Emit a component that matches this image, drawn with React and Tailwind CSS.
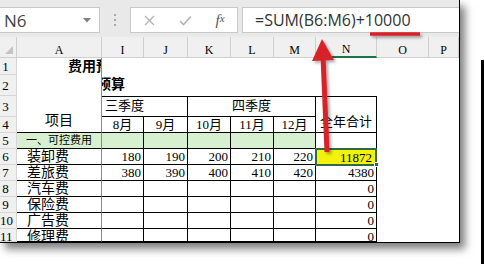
import React from "react";

const colStart = ["col-start-1", "col-start-2", "col-start-3", "col-start-4", "col-start-5", "col-start-6", "col-start-7", "col-start-8", "col-start-9", "col-start-10"];
const rowStart = ["row-start-1", "row-start-2", "row-start-3", "row-start-4", "row-start-5", "row-start-6", "row-start-7", "row-start-8", "row-start-9", "row-start-10", "row-start-11", "row-start-12"];

const tableFont = "font-['Liberation_Serif','Noto_Sans_CJK_SC',serif]";

const letters = ["A", "I", "J", "K", "L", "M", "N", "O", "P"];
const months = ["8月", "9月", "10月", "11月", "12月"];
const items = [
  ["装卸费", [180, 190, 200, 210, 220], 11872],
  ["差旅费", [380, 390, 400, 410, 420], 4380],
  ["汽车费", [], 0],
  ["保险费", [], 0],
  ["广告费", [], 0],
  ["修理费", [], 0],
];

function Cell({ c, r, className = "", children }) {
  return (
    <div className={`${colStart[c - 1]} ${rowStart[r - 1]} flex min-w-0 overflow-hidden text-black ${className}`}>
      {children}
    </div>
  );
}

function Toolbar() {
  return (
    <div className="flex h-[37px] items-start bg-[#e9e9e9] pt-[7px] font-['Open_Sans','Noto_Sans',sans-serif]">
      <div className="flex h-[26px] w-[100px] items-center justify-between border border-l-0 border-[#c8c8c8] bg-white pl-[4px] pr-[8px]">
        <span className="text-[17px] leading-none text-[#444]">N6</span>
        <svg width="8" height="5" viewBox="0 0 8 5">
          <path d="M0 0 L8 0 L4 4.5 Z" fill="#808080" />
        </svg>
      </div>
      <div className="flex h-[26px] w-[30px] flex-col items-center justify-center gap-[3px]">
        <span className="h-[2px] w-[2px] bg-[#a8a8a8]" />
        <span className="h-[2px] w-[2px] bg-[#a8a8a8]" />
        <span className="h-[2px] w-[2px] bg-[#a8a8a8]" />
      </div>
      <div className="flex h-[26px] w-[108px] items-center border border-[#c8c8c8] bg-white">
        <span className="flex w-[36px] justify-center">
          <svg width="11" height="11" viewBox="0 0 11 11">
            <path d="M1 1 L10 10 M10 1 L1 10" stroke="#b4b4b4" strokeWidth="1.4" />
          </svg>
        </span>
        <span className="flex w-[36px] justify-center">
          <svg width="13" height="11" viewBox="0 0 13 11">
            <path d="M1 6 L4.5 9.5 L12 1.5" stroke="#b4b4b4" strokeWidth="1.6" fill="none" />
          </svg>
        </span>
        <span className="flex w-[34px] justify-center font-['Liberation_Serif',serif] text-[15px] italic leading-none text-[#555]">
          f<span className="text-[11px]">x</span>
        </span>
      </div>
      <div className="ml-[4px] flex h-[26px] flex-1 items-center border border-r-0 border-[#c8c8c8] bg-white pl-[12px]">
        <span className="text-[16px] leading-none text-[#333]">=SUM(B6:M6)+10000</span>
      </div>
    </div>
  );
}

function Sheet() {
  const hdr = "items-end justify-center border-b border-r border-[#cfcfcf] bg-[#f0f0f0] pb-[1px] text-[12px] leading-none";
  const rowHdr = "items-start border-b border-r border-[#d6d6d6] bg-[#f0f0f0] text-[13px]";
  const freeze = "border-r border-r-[#8a8a8a]";
  const box = "border-b border-r border-black";

  return (
    <div className={`grid grid-cols-[17px_85px_42px_44px_43px_43px_42px_61px_52px_30px] grid-rows-[21px_17px_21px_21px_16px_16px_16px_16px_16px_16px_16px_13px] ${tableFont}`}>
      {/* corner */}
      <Cell c={1} r={1} className="items-end justify-end border-b border-r border-[#cfcfcf] bg-[#f0f0f0] p-[3px]">
        <svg width="8" height="8" viewBox="0 0 8 8">
          <path d="M8 0 L8 8 L0 8 Z" fill="#c4c4c4" />
        </svg>
      </Cell>
      {letters.map((l, i) => (
        <Cell
          key={l}
          c={i + 2}
          r={1}
          className={`${hdr} ${l === "N" ? "border-b-2 border-b-[#217346] bg-[#dedede]" : ""}`}
        >
          {l}
        </Cell>
      ))}

      {/* row headers */}
      {Array.from({ length: 11 }, (_, i) => (
        <Cell key={i} c={1} r={i + 2} className={`${rowHdr} ${i === 5 ? "bg-[#dcdcdc]" : ""}`}>
          <span className={`block w-[11px] text-center ${i < 4 ? (i === 3 ? "leading-[16px]" : "mt-auto leading-[18px]") : "leading-[16px]"}`}>
            {i + 1}
          </span>
        </Cell>
      ))}

      {/* row 1 title */}
      <Cell c={2} r={2} className={`${freeze} items-center whitespace-nowrap pl-[51px] text-[14px] font-bold`}>
        费用预算
      </Cell>
      {/* row 2 title */}
      <Cell c={3} r={3} className="col-span-2 items-end whitespace-nowrap pb-[1px] text-[14px] font-bold">
        <span className="-ml-[5px]">预算</span>
      </Cell>
      <Cell c={2} r={3} className={freeze} />

      {/* row 3/4 headers */}
      <Cell c={2} r={4} className={`row-span-2 ${freeze} items-end justify-center border-b border-b-black pb-[1px] text-[14px]`}>
        项目
      </Cell>
      <Cell c={3} r={4} className={`col-span-2 ${box} items-end border-t pb-[1px] pl-[3px] text-[13px]`}>
        三季度
      </Cell>
      <Cell c={5} r={4} className={`col-span-3 ${box} items-end justify-center border-t pb-[1px] text-[13px]`}>
        四季度
      </Cell>
      <Cell c={8} r={4} className={`row-span-2 ${box} items-end justify-center border-t pb-[1px] text-[13px]`}>
        全年合计
      </Cell>
      {months.map((m, i) => (
        <Cell key={m} c={i + 3} r={5} className={`${box} items-center justify-center text-[13px]`}>
          {m}
        </Cell>
      ))}

      {/* row 5 green */}
      <Cell c={2} r={6} className="items-center border-b border-r border-b-black border-r-[#8a8a8a] bg-[#d7f1d0] pl-[9px] text-[11px]">
        一、可控费用
      </Cell>
      {[3, 4, 5, 6, 7].map((c) => (
        <Cell key={c} c={c} r={6} className={`${box} bg-[#d7f1d0]`} />
      ))}
      <Cell c={8} r={6} className={box} />

      {/* data rows */}
      {items.map(([name, vals, total], ri) => (
        <React.Fragment key={name}>
          <Cell c={2} r={ri + 7} className="items-start border-b border-r border-b-black border-r-[#8a8a8a] pl-[10px] text-[14px] leading-[15px]">
            {name}
          </Cell>
          {[0, 1, 2, 3, 4].map((j) => (
            <Cell key={j} c={j + 3} r={ri + 7} className={`${box} items-start justify-end pr-[2px] text-[13px] leading-[15px]`}>
              {vals[j] ?? ""}
            </Cell>
          ))}
          {ri === 0 ? (
            <Cell c={8} r={7} className="relative overflow-visible">
              <div className="-ml-[1px] -mt-[1px] flex h-[18px] w-[63px] items-center justify-end border-2 border-[#2f6b42] bg-[#f2f20e] pr-[3px] text-[13px] leading-none">
                {total}
              </div>
              <span className="absolute -bottom-[2px] -right-[2px] h-[5px] w-[5px] border border-white bg-[#2f6b42]" />
            </Cell>
          ) : (
            <Cell c={8} r={ri + 7} className={`${box} items-start justify-end pr-[2px] text-[13px] leading-[15px]`}>
              {total}
            </Cell>
          )}
        </React.Fragment>
      ))}
    </div>
  );
}

export default function App() {
  return (
    <div className="relative h-[264px] w-[484px] overflow-hidden bg-white">
      <div className="w-[460px] border-b border-r border-black bg-white shadow-[5px_6px_8px_rgba(0,0,0,0.5)]">
        <Toolbar />
        <Sheet />
      </div>
      <div className="absolute right-0 top-[60px] bottom-0 w-[3px] bg-black" />
      <svg className="pointer-events-none absolute inset-0" width="484" height="264">
        <defs>
          <filter id="sh" x="-50%" y="-50%" width="200%" height="200%">
            <feDropShadow dx="2" dy="2" stdDeviation="1.5" floodColor="#000" floodOpacity="0.35" />
          </filter>
        </defs>
        <g filter="url(#sh)">
          <line x1="370" y1="34" x2="420" y2="34" stroke="#d8232a" strokeWidth="3.5" />
          <line x1="323" y1="56" x2="327" y2="152" stroke="#d8232a" strokeWidth="5" />
          <path d="M322 39 L334 60 L312 61 Z" fill="#d8232a" />
        </g>
      </svg>
    </div>
  );
}
